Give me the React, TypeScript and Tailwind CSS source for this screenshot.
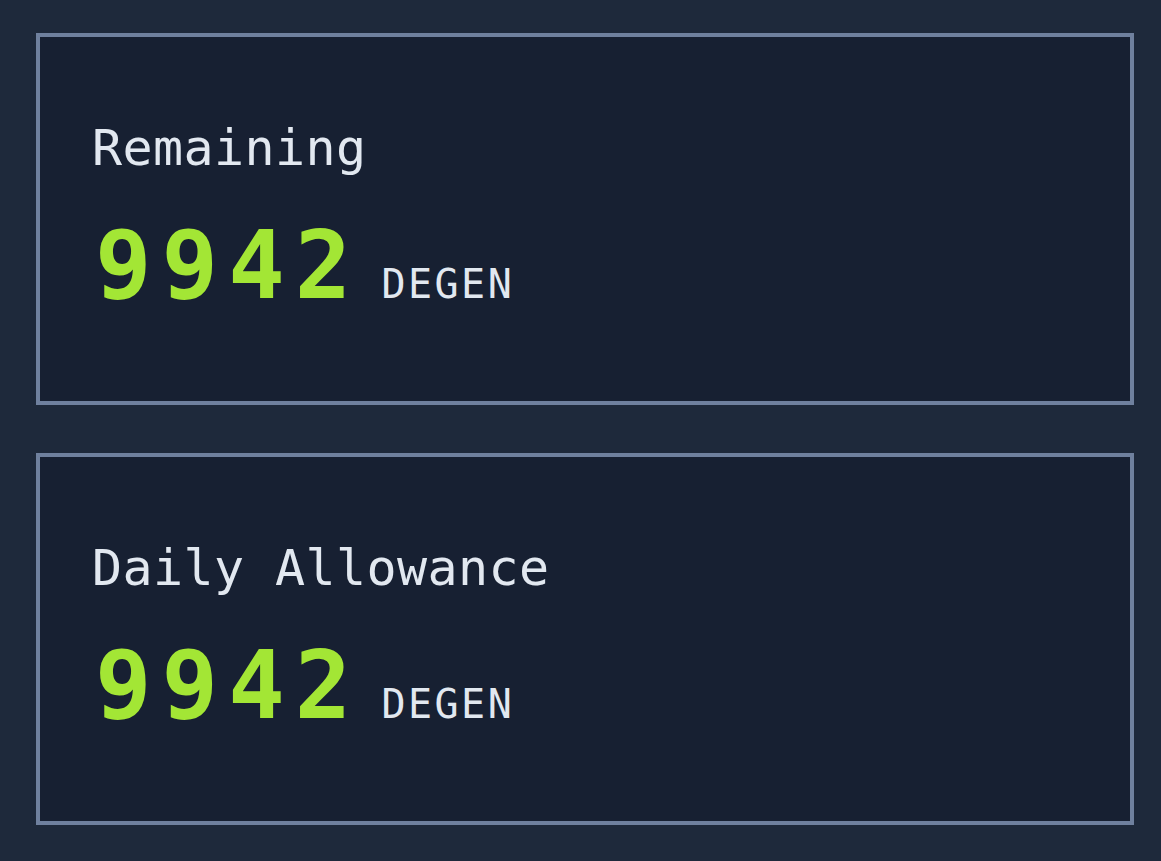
import React from "react";

function Card({ label }: { label: string }) {
  return (
    <div className="w-[1098px] h-[372px] border-4 border-[#6f809e] bg-[#172032] flex flex-col justify-center pl-[52px]">
      <div className="text-[50px] leading-none text-[#e2e8f0] tracking-[0.4px] -mt-[2px]" style={{ fontFamily: '"DejaVu Sans Mono", monospace' }}>
        {label}
      </div>
      <div className="flex items-baseline mt-[46px]" style={{ fontFamily: '"DejaVu Sans Mono", monospace' }}>
        <span className="text-[94px] leading-none font-bold text-[#a3e635] tracking-[10px] ml-[3px]">9942</span>
        <span className="text-[40px] leading-none text-[#e2e8f0] tracking-[2.5px] ml-[20px]">DEGEN</span>
      </div>
    </div>
  );
}

export default function App() {
  return (
    <div className="w-[1161px] h-[861px] bg-[#1e293b] pt-[33px] pl-[36px] flex flex-col gap-[48px] overflow-hidden">
      <Card label="Remaining" />
      <Card label="Daily Allowance" />
    </div>
  );
}
